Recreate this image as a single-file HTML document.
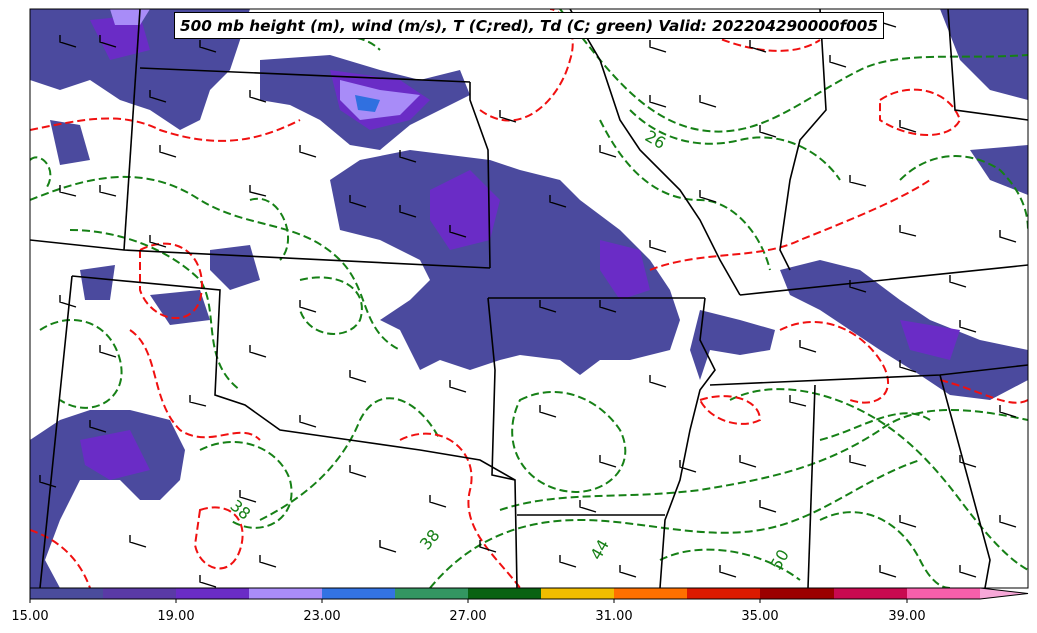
<!DOCTYPE html>
<html><head><meta charset="utf-8"><style>
html,body{margin:0;padding:0;background:#fff;width:1037px;height:633px;overflow:hidden}
svg{display:block}
</style></head><body>
<svg width="1037" height="633" viewBox="0 0 1037 633" xmlns="http://www.w3.org/2000/svg">
<defs><clipPath id="c"><rect x="30" y="9" width="998" height="579"/></clipPath></defs>
<rect width="1037" height="633" fill="#fff"/>
<g clip-path="url(#c)">
<g fill="#4b4a9e">
<path d="M30 9 H250 L240 40 L230 70 L210 90 L200 120 L180 130 L150 110 L120 100 L90 80 L60 90 L30 80Z"/>
<path d="M260 60 L330 55 L380 70 L420 80 L460 70 L470 95 L440 110 L410 125 L380 150 L350 145 L320 120 L290 105 L260 100Z"/>
<path d="M330 180 L360 160 L410 150 L450 155 L490 160 L520 170 L560 180 L580 200 L620 230 L650 260 L670 290 L680 320 L670 350 L630 360 L600 360 L580 375 L560 360 L520 355 L500 360 L470 370 L440 360 L420 370 L400 330 L380 320 L410 300 L430 280 L420 260 L380 240 L340 230Z"/>
<path d="M700 310 L740 320 L775 330 L770 350 L740 355 L710 350 L700 380 L690 350Z"/>
<path d="M780 270 L820 260 L860 270 L900 300 L930 320 L980 340 L1028 350 L1028 380 L990 400 L950 395 L920 375 L880 350 L850 330 L820 310 L790 295Z"/>
<path d="M30 440 L60 420 L90 410 L130 410 L170 420 L185 450 L180 480 L160 500 L140 500 L120 480 L80 480 L60 520 L45 560 L60 588 L30 588Z"/>
<path d="M210 250 L250 245 L260 280 L230 290 L210 270Z"/>
<path d="M940 9 H1028 V100 L990 90 L960 60Z"/>
<path d="M970 150 L1028 145 L1028 195 L990 180Z"/>
<path d="M50 120 L80 125 L90 160 L60 165Z"/>
<path d="M80 270 L115 265 L110 300 L85 300Z"/>
<path d="M150 295 L200 290 L210 320 L170 325Z"/>
</g>
<g fill="#6a2cc6">
<path d="M90 20 L140 15 L150 50 L110 60Z"/>
<path d="M330 70 L400 80 L430 100 L410 120 L370 130 L340 110Z"/>
<path d="M430 190 L470 170 L500 200 L490 240 L450 250 L430 220Z"/>
<path d="M600 240 L640 250 L650 290 L620 300 L600 270Z"/>
<path d="M900 320 L960 330 L950 360 L910 350Z"/>
<path d="M80 440 L130 430 L150 470 L110 480 L85 465Z"/>
</g>
<g fill="#a88cf8"><path d="M340 80 L380 90 L420 95 L400 115 L360 120 L340 100Z"/><path d="M110 9 L150 9 L140 25 L115 25Z"/></g>
<g fill="#3070e0"><path d="M355 95 L380 100 L375 112 L358 110Z"/></g>
<g fill="none" stroke="#168016" stroke-width="2" stroke-dasharray="8,4">
<path d="M560 9 C600 60 640 120 700 130 C760 140 800 100 860 70 C900 50 960 60 1028 55"/>
<path d="M630 110 C660 140 700 150 740 140 C780 130 820 150 840 180"/>
<path d="M30 200 C80 180 140 160 200 200 C250 230 300 220 340 260 C370 290 360 330 400 350"/>
<path d="M70 230 C120 230 170 250 200 280 C220 310 200 360 240 390"/>
<path d="M520 400 C560 380 600 400 620 430 C640 470 600 500 560 490 C520 480 500 440 520 400Z"/>
<path d="M500 510 C560 490 620 500 700 490 C760 480 820 470 880 430 C920 400 980 410 1028 420"/>
<path d="M430 588 C470 540 520 520 580 520 C640 520 700 540 760 530 C820 520 860 480 920 460"/>
<path d="M260 520 C300 500 340 470 360 420 C380 380 420 400 440 440"/>
<path d="M200 450 C240 430 280 450 290 480 C300 520 260 540 230 520"/>
<path d="M730 400 C770 380 820 390 860 410 C900 430 930 460 960 500 C990 540 1010 560 1028 570"/>
<path d="M900 180 C930 150 970 150 1000 170 C1020 190 1028 210 1028 230"/>
<path d="M40 330 C70 310 110 320 120 360 C130 400 90 420 60 400"/>
<path d="M600 120 C620 160 650 200 700 200 C730 200 760 230 770 270"/>
<path d="M660 560 C700 540 760 550 800 580"/>
<path d="M820 520 C860 500 900 520 920 560 C930 580 940 588 950 588"/>
<path d="M300 280 C340 270 370 290 360 320 C350 340 310 340 300 310"/>
<path d="M30 160 C40 150 60 170 45 190"/>
<path d="M300 20 C330 40 360 30 380 50"/>
<path d="M250 200 C280 190 300 240 280 260"/>
<path d="M820 440 C860 430 900 400 930 420"/>
</g>
<g fill="none" stroke="#f01010" stroke-width="2" stroke-dasharray="8,4">
<path d="M30 130 C80 120 120 110 160 130 C220 150 260 140 300 120"/>
<path d="M140 250 C180 230 210 260 200 300 C190 330 150 320 140 290Z"/>
<path d="M130 330 C160 350 150 400 180 430 C210 450 240 420 260 440"/>
<path d="M480 110 C520 140 560 100 570 60 C580 30 560 9 550 9"/>
<path d="M650 270 C700 250 760 260 800 240 C850 220 900 200 930 180"/>
<path d="M780 330 C820 310 860 330 880 360 C900 390 880 410 850 400"/>
<path d="M400 440 C440 420 480 450 470 490 C460 530 500 560 520 588"/>
<path d="M200 510 C230 500 250 520 240 550 C230 580 200 570 195 545Z"/>
<path d="M700 400 C730 390 760 400 760 420 C740 430 710 420 700 400Z"/>
<path d="M940 380 C980 390 1010 410 1028 400"/>
<path d="M880 100 C910 80 950 90 960 120 C950 140 910 140 880 120Z"/>
<path d="M30 530 C60 540 80 560 90 588"/>
<path d="M700 30 C740 50 790 60 820 40"/>
</g>
<g fill="none" stroke="#000" stroke-width="1.6">
<path d="M140 9 L124 250"/>
<path d="M140 68 L470 82"/>
<path d="M30 240 L124 250 L490 268"/>
<path d="M72 276 L220 290 L215 395 L245 405 L280 430 L350 440 L420 450 L480 460 L515 480"/>
<path d="M72 276 L40 588"/>
<path d="M490 268 L488 150 L470 100 L470 82"/>
<path d="M488 298 L705 298"/>
<path d="M488 298 L495 370 L492 475 L515 480 L517 588"/>
<path d="M517 515 L665 515"/>
<path d="M705 298 L700 340 L715 370 L700 390 L690 430 L680 480 L665 520 L660 588"/>
<path d="M740 295 L1028 265"/>
<path d="M710 385 L940 375 L1028 365"/>
<path d="M815 385 L808 588"/>
<path d="M940 375 L990 560 L985 588"/>
<path d="M570 9 L600 60 L620 120 L640 150 L680 190 L700 220 L720 260 L740 295"/>
<path d="M820 9 L826 110 L800 140 L790 180 L780 250 L790 270"/>
<path d="M948 9 L955 110 L1028 120"/>
</g>
<g fill="none" stroke="#000" stroke-width="1.4">
<path d="M60 35 l0 7 l16 5 M100 35 l0 7 l16 5 M150 90 l0 7 l16 5 M60 185 l0 7 l16 4 M100 185 l0 7 l16 4 M150 235 l0 7 l16 5 M250 185 l0 7 l16 4 M300 145 l0 7 l16 5 M350 195 l0 7 l16 5 M400 205 l0 7 l16 5 M450 225 l0 7 l16 5 M550 195 l0 7 l16 5 M600 145 l0 7 l16 5 M650 95 l0 7 l16 5 M700 95 l0 7 l16 5 M760 125 l0 7 l16 5 M850 175 l0 7 l16 4 M900 225 l0 7 l16 4 M950 275 l0 7 l16 5 M60 295 l0 7 l16 5 M100 345 l0 7 l16 5 M190 395 l0 7 l16 4 M250 345 l0 7 l16 5 M300 415 l0 7 l16 5 M350 465 l0 7 l16 5 M430 495 l0 7 l16 5 M540 405 l0 7 l16 5 M600 455 l0 7 l16 5 M650 375 l0 7 l16 5 M740 455 l0 7 l16 5 M790 395 l0 7 l16 4 M850 455 l0 7 l16 4 M900 515 l0 7 l16 5 M960 455 l0 7 l16 5 M1000 515 l0 7 l16 5 M130 535 l0 7 l16 5 M200 575 l0 7 l16 5 M260 555 l0 7 l16 5 M560 555 l0 7 l16 5 M620 565 l0 7 l16 5 M720 565 l0 7 l16 5 M880 565 l0 7 l16 5 M960 565 l0 7 l16 5 M1000 405 l0 7 l16 5 M830 55 l0 7 l16 5 M880 15 l0 7 l16 5 M40 475 l0 7 l16 5 M160 145 l0 7 l16 5 M200 40 l0 7 l16 5 M250 90 l0 7 l16 5 M400 150 l0 7 l16 5 M500 110 l0 7 l16 5 M700 190 l0 7 l16 5 M650 240 l0 7 l16 5 M600 300 l0 7 l16 5 M540 300 l0 7 l16 5 M300 300 l0 7 l16 5 M350 370 l0 7 l16 5 M450 380 l0 7 l16 5 M580 500 l0 7 l16 5 M680 460 l0 7 l16 5 M800 340 l0 7 l16 5 M850 280 l0 7 l16 5 M900 360 l0 7 l16 5 M960 320 l0 7 l16 5 M1000 230 l0 7 l16 5 M900 120 l0 7 l16 5 M750 40 l0 7 l16 5 M650 40 l0 7 l16 5 M90 420 l0 7 l16 5 M240 490 l0 7 l16 5 M380 540 l0 7 l16 5 M480 540 l0 7 l16 5 M760 500 l0 7 l16 5"/>
</g>
<g fill="#168016" font-family="DejaVu Sans, sans-serif" font-size="16">
<text x="645" y="145" transform="rotate(30 655 140)">26</text>
<text x="420" y="545" transform="rotate(-50 430 540)">38</text>
<text x="590" y="555" transform="rotate(-60 600 550)">44</text>
<text x="770" y="565" transform="rotate(-60 780 560)">50</text>
<text x="230" y="515" transform="rotate(40 240 510)">38</text>
</g>
</g>
<rect x="30" y="9" width="998" height="579" fill="none" stroke="#000" stroke-width="1"/>
<rect x="174.5" y="12.5" width="709" height="26" fill="#fff" stroke="#000" stroke-width="1"/>
<text x="180" y="31" font-family="DejaVu Sans, sans-serif" font-size="15" font-weight="bold" font-style="italic" textLength="698" lengthAdjust="spacingAndGlyphs">500 mb height (m), wind (m/s), T (C;red), Td (C; green) Valid: 202204290000f005</text>
<g>
<rect x="30" y="588" width="73" height="11" fill="#4a4c9c"/>
<rect x="103" y="588" width="73" height="11" fill="#5a3aa6"/>
<rect x="176" y="588" width="73" height="11" fill="#6a2cc6"/>
<rect x="249" y="588" width="73" height="11" fill="#a98cf8"/>
<rect x="322" y="588" width="73" height="11" fill="#3373e3"/>
<rect x="395" y="588" width="73" height="11" fill="#339662"/>
<rect x="468" y="588" width="73" height="11" fill="#096212"/>
<rect x="541" y="588" width="73" height="11" fill="#f0bd00"/>
<rect x="614" y="588" width="73" height="11" fill="#ff7000"/>
<rect x="687" y="588" width="73" height="11" fill="#dc1a00"/>
<rect x="760" y="588" width="74" height="11" fill="#9b0000"/>
<rect x="834" y="588" width="73" height="11" fill="#c80a50"/>
<rect x="907" y="588" width="73" height="11" fill="#f75fab"/>
<path d="M980 588 L1028 593.5 L980 599Z" fill="#f7a8d8"/>
<path d="M30 588 H980 L1028 593.5 L980 599 H30Z" fill="none" stroke="#000" stroke-width="1"/>
</g>
<g stroke="#000" stroke-width="1"><path d="M30 599v4M176 599v4M322 599v4M468 599v4M614 599v4M760 599v4M907 599v4"/></g>
<g font-family="DejaVu Sans, sans-serif" font-size="13" text-anchor="middle" fill="#000">
<text x="30" y="620">15.00</text><text x="176" y="620">19.00</text><text x="322" y="620">23.00</text><text x="468" y="620">27.00</text><text x="614" y="620">31.00</text><text x="760" y="620">35.00</text><text x="907" y="620">39.00</text>
</g>
</svg>
</body></html>
